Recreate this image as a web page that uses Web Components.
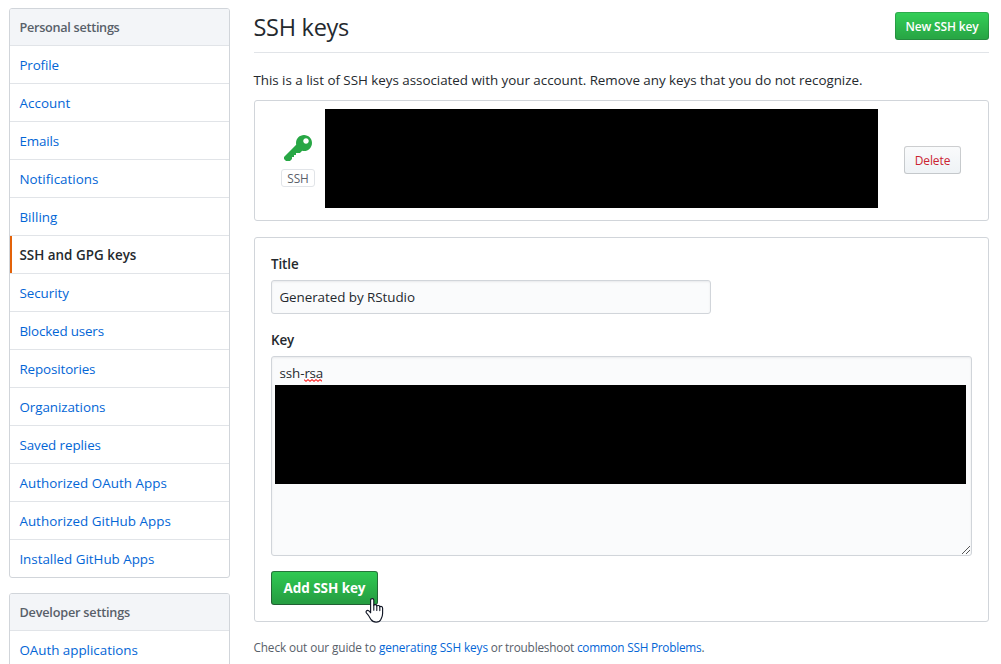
<!DOCTYPE html>
<html lang="en">
<head>
<meta charset="utf-8">
<title>SSH keys</title>
<style>
html,body{margin:0;height:100%;overflow:hidden;background:#fff}
body{font-family:"Open Sans","Noto Sans",sans-serif;font-size:13.4px;line-height:20px;color:#24292e}
</style>
</head>
<body>
<settings-page></settings-page>
<script>
const define = (name, html, setup) => {
  const template = document.createElement('template');
  template.innerHTML = html;
  customElements.define(name, class extends HTMLElement {
    constructor() {
      super();
      this.attachShadow({ mode: 'open' }).append(template.content.cloneNode(true));
    }
    connectedCallback() { if (setup) setup(this); }
  });
};

// Text run whose tracking is spread so that it takes the given measure.
define('fit-text', `<style>:host{display:inline-block;white-space:pre}</style><span><slot></slot></span>`, el => {
  const target = +el.getAttribute('measure');
  const chars = el.textContent.length;
  const natural = el.shadowRoot.querySelector('span').getBoundingClientRect().width;
  if (target && natural) el.style.letterSpacing = ((target - natural) / chars).toFixed(3) + 'px';
});

define('nav-menu', `<style>
:host{display:block;box-sizing:border-box;border:1px solid #d1d5da;border-radius:3px;background:#fff;overflow:hidden}
header{box-sizing:border-box;height:36px;padding:8px 9.5px;line-height:20px;font-size:12.7px;font-weight:600;color:#586069;background:#f3f5f8}
</style><header><slot name="heading"></slot></header><slot></slot>`);

define('nav-item', `<style>
:host{display:block;box-sizing:border-box;height:38px;padding:9px 9.4px 8px;line-height:20px;border-top:1px solid #e1e4e8;color:#0366d6}
:host([selected]){color:#24292e;font-weight:600;background:linear-gradient(#e36209,#e36209) left/2px 100% no-repeat}
</style><slot></slot>`);

define('push-button', `<style>
:host{display:inline-flex;flex:none;box-sizing:border-box;align-items:center;justify-content:center;width:94px;height:28px;padding-top:2px;border:1px solid rgba(27,31,35,.2);border-radius:3px;font-size:12px;font-weight:600;line-height:18px;white-space:nowrap}
:host([kind=primary]){color:#fff;background:linear-gradient(#34d058,#28a745 90%) border-box}
:host([kind=danger]){width:57px;color:#cb2431;font-weight:500;background:linear-gradient(#fafbfc,#eff3f6 90%) border-box}
:host([large]){width:107px;height:34px;padding-top:0;font-size:13.5px;font-weight:700;border-color:rgba(27,31,35,.5);background:linear-gradient(#2fcb53,#269f42 90%) border-box}
</style><slot></slot>`);

define('key-badge', `<style>
:host{display:flex;flex-direction:column;align-items:center;width:34px}
svg{display:block;width:28px;height:32px;fill:#28a745}
span{box-sizing:border-box;width:34px;height:18px;margin-top:4px;border:1px solid #e1e4e8;border-radius:3px;text-align:center;font-size:11.8px;line-height:17px;color:#586069}
</style>
<svg viewBox="0 0 14 16"><path fill-rule="evenodd" d="M12.83 2.17C12.08 1.42 11.14 1.03 10 1c-1.13.03-2.08.42-2.83 1.17S6.04 3.86 6.01 5c0 .3.03.59.09.89L0 12v1l1 1h2l1-1v-1h1v-1h1v-1h2l1.09-1.11c.3.08.59.11.91.11 1.14-.03 2.08-.42 2.83-1.17S13.97 6.14 14 5c-.03-1.14-.42-2.08-1.17-2.83zM11 5.38c-.77 0-1.38-.61-1.38-1.38 0-.77.61-1.38 1.38-1.38.77 0 1.38.61 1.38 1.38 0 .77-.61 1.38-1.38 1.38z"/></svg>
<span><fit-text measure="21.5">SSH</fit-text></span>`);

define('redacted-block', `<style>:host{display:block;height:99px;background:#000}</style>`);

define('key-row', `<style>
:host{display:flex;box-sizing:border-box;height:121px;border:1px solid #d1d5da;border-radius:3px;padding:8px 27px 0 26px}
key-badge{margin-top:24px;margin-right:10px}
redacted-block{width:553px}
push-button{margin:37px 0 0 auto}
</style>
<key-badge></key-badge><redacted-block></redacted-block>
<push-button kind="danger"><fit-text measure="35.5">Delete</fit-text></push-button>`);

define('text-field', `<style>
:host{display:block}
label{display:block;height:20px;line-height:20px;font-weight:600}
.box{box-sizing:border-box;position:relative;margin-top:6px;width:440px;height:34px;padding:6px 7.4px;line-height:20px;border:1px solid #d1d5da;border-radius:3px;background:#fafbfc;box-shadow:inset 0 1px 2px rgba(27,31,35,.075)}
:host([multiline]) .box{width:701px;height:200px;padding:6px 5px 0 3px}
svg{display:none;position:absolute;right:-1px;bottom:0;width:10px;height:10px}
:host([multiline]) svg{display:block}
</style><label><slot name="label"></slot></label>
<div class="box"><slot></slot><svg viewBox="0 0 10 10" shape-rendering="crispEdges" fill="#555"><path d="M0 8h1v1h-1zM1 7h1v1h-1zM2 6h1v1h-1zM3 5h1v1h-1zM4 4h1v1h-1zM5 3h1v1h-1zM6 2h1v1h-1zM7 1h1v1h-1zM4 8h1v1h-1zM5 7h1v1h-1zM6 6h1v1h-1zM7 5h1v1h-1z"/></svg></div>`);

define('misspelled-word', `<style>
:host{display:inline-block;position:relative}
svg{position:absolute;left:0;top:16px;width:18px;height:3px}
</style><slot></slot><svg viewBox="0 0 18 3"><path d="M0 .6L2 2.3 4 .6 6 2.3 8 .6 10 2.3 12 .6 14 2.3 16 .6 18 2.3" fill="none" stroke="#f22" stroke-width="1.1"/></svg>`);

define('hand-pointer', `<style>:host{display:block;width:19px;height:26px}svg{display:block}</style>
<svg width="19" height="26" viewBox="0 0 19 26"><path d="M5.6 15.8V3.2c0-2.2 3.2-2.2 3.2 0v5c.5-1 2.8-.8 3 .8.7-.9 2.8-.6 3 .8.8-.7 2.8-.4 2.8 1.4v5.2c0 3.2-1.2 4.5-1.8 6.2-.7 1.7-2.6 2.5-4.7 2.5-2.4 0-4-.7-5.2-2.7-1.1-2-2.5-4.6-4.3-6.3-1.3-1.5.3-3.4 2.1-2.4.8.4 1.3 1.2 1.9 2.1z" fill="#fff" stroke="#111625" stroke-width="1.15" stroke-linejoin="round"/><path d="M8.8 8v5.2M11.8 9v4.4M14.8 10v3.6" fill="none" stroke="#111625" stroke-width="1.1" stroke-linecap="round"/></svg>`);

define('key-form', `<style>
:host{display:block;box-sizing:border-box;height:385px;border:1px solid #d1d5da;border-radius:3px;padding:16px}
text-field + text-field{margin-top:16px}
.key{margin-left:4.4px}
.submit{position:relative;width:107px;height:34px;margin-top:15px}
hand-pointer{position:absolute;left:94px;top:25.5px}
</style>
<text-field><fit-text slot="label" measure="27.5">Title</fit-text><fit-text measure="135.5">Generated by RStudio</fit-text></text-field>
<text-field multiline><fit-text slot="label" measure="23">Key</fit-text><fit-text class="key" measure="25">ssh-</fit-text><misspelled-word><fit-text measure="18.5">rsa</fit-text></misspelled-word><redacted-block style="margin-top:2px"></redacted-block></text-field>
<div class="submit"><push-button kind="primary" large><fit-text measure="82">Add SSH key</fit-text></push-button><hand-pointer></hand-pointer></div>`);

define('settings-page', `<style>
:host{display:flex;box-sizing:border-box;width:1001px;height:664px;overflow:hidden;padding:8px 12px 0 9px;gap:24px}
nav{display:flex;flex-direction:column;gap:15px;width:221px;flex:none}
nav-menu{flex:none}
nav-menu + nav-menu{height:100px}
main{width:735px;flex:none}
.head{display:flex;justify-content:space-between;align-items:flex-start;box-sizing:border-box;height:45px;padding-top:4px;border-bottom:1px solid #e1e4e8}
h1{margin:-1px 0 0 -.5px;font-size:23.5px;font-weight:400;line-height:32px}
p{margin:0}
.intro{height:20px;margin:17px 0 10px -.6px}
key-form{margin-top:16px}
.help{margin:15px 0 0 -.6px;font-size:11.8px;line-height:20px;color:#586069;white-space:nowrap}
a{color:#0366d6}
</style>
<nav>
<nav-menu><fit-text slot="heading" measure="100">Personal settings</fit-text>
<nav-item><fit-text measure="39.5">Profile</fit-text></nav-item>
<nav-item><fit-text measure="51">Account</fit-text></nav-item>
<nav-item><fit-text measure="39.5">Emails</fit-text></nav-item>
<nav-item><fit-text measure="79">Notifications</fit-text></nav-item>
<nav-item><fit-text measure="38">Billing</fit-text></nav-item>
<nav-item selected><fit-text measure="117">SSH and GPG keys</fit-text></nav-item>
<nav-item><fit-text measure="49.5">Security</fit-text></nav-item>
<nav-item><fit-text measure="84.5">Blocked users</fit-text></nav-item>
<nav-item><fit-text measure="76">Repositories</fit-text></nav-item>
<nav-item><fit-text measure="86">Organizations</fit-text></nav-item>
<nav-item><fit-text measure="81.5">Saved replies</fit-text></nav-item>
<nav-item><fit-text measure="147.5">Authorized OAuth Apps</fit-text></nav-item>
<nav-item><fit-text measure="151.5">Authorized GitHub Apps</fit-text></nav-item>
<nav-item><fit-text measure="135">Installed GitHub Apps</fit-text></nav-item>
</nav-menu>
<nav-menu><fit-text slot="heading" measure="110.5">Developer settings</fit-text>
<nav-item><fit-text measure="118.5">OAuth applications</fit-text></nav-item>
</nav-menu>
</nav>
<main>
<div class="head"><h1><fit-text measure="95.5">SSH keys</fit-text></h1><push-button kind="primary"><fit-text measure="73">New SSH key</fit-text></push-button></div>
<p class="intro"><fit-text measure="609">This is a list of SSH keys associated with your account. Remove any keys that you do not recognize.</fit-text></p>
<key-row></key-row>
<key-form></key-form>
<p class="help"><fit-text measure="125.5">Check out our guide to </fit-text><a><fit-text measure="109">generating SSH keys</fit-text></a><fit-text measure="89"> or troubleshoot </fit-text><a><fit-text measure="124.5">common SSH Problems</fit-text></a>.</p>
</main>`);
</script>
</body>
</html>
